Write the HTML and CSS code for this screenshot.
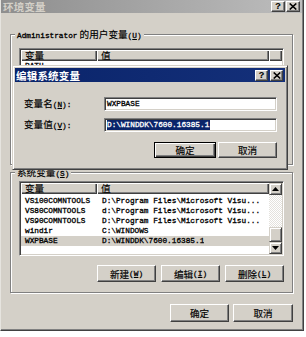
FILE: index.html
```html
<!DOCTYPE html>
<html>
<head>
<meta charset="utf-8">
<title>环境变量</title>
<link rel="stylesheet" href="styles.css">
</head>
<body>
<div class="win">
  <div class="titlebar inactive">
    <span class="ttext">环境变量</span>
    <div class="tbtns">
      <span class="tbtn q">?</span>
      <span class="tbtn"><svg width="8" height="7" viewBox="0 0 8 7"><path d="M0.7 0.5 L7.3 6.5 M7.3 0.5 L0.7 6.5" stroke="#000" stroke-width="1.6"/></svg></span>
    </div>
  </div>
  <div class="client">
    <div class="group user">
      <span class="glabel"><span class="m">Administrator</span> 的用户变量<span class="m">(<u>U</u>)</span></span>
      <div class="list ulist">
        <div class="lmain">
          <div class="lhead"><span class="hc c1">变量</span><span class="hc c2">值</span><span class="hc c3"></span></div>
          <div class="rows urows">
            <div class="row"><span class="c1 m">PATH</span><span class="c2 m"></span></div>
          </div>
        </div>
      </div>
    </div>

    <div class="group sys">
      <span class="glabel">系统变量<span class="m">(<u>S</u>)</span></span>
      <div class="list slist">
        <div class="lmain">
          <div class="lhead"><span class="hc c1">变量</span><span class="hc c2 grow">值</span></div>
          <div class="rows">
            <div class="row"><span class="c1 m">VS100COMNTOOLS</span><span class="c2 m">D:\Program Files\Microsoft Visu...</span></div>
            <div class="row"><span class="c1 m">VS80COMNTOOLS</span><span class="c2 m">d:\Program Files\Microsoft Visu...</span></div>
            <div class="row"><span class="c1 m">VS90COMNTOOLS</span><span class="c2 m">D:\Program Files\Microsoft Visu...</span></div>
            <div class="row"><span class="c1 m">windir</span><span class="c2 m">C:\WINDOWS</span></div>
            <div class="row sel"><span class="c1 m">WXPBASE</span><span class="c2 m">D:\WINDDK\7600.16385.1</span></div>
          </div>
        </div>
        <div class="sbar">
          <span class="sbtn"><svg width="7" height="4" viewBox="0 0 7 4"><path d="M3.5 0 L7 4 L0 4 Z" fill="#000"/></svg></span>
          <span class="track"></span>
          <span class="thumb"></span>
          <span class="sbtn"><svg width="7" height="4" viewBox="0 0 7 4"><path d="M0 0 L7 0 L3.5 4 Z" fill="#000"/></svg></span>
        </div>
      </div>
      <div class="btnrow">
        <button class="btn w59">新建<span class="m">(<u>W</u>)</span></button>
        <button class="btn w59">编辑<span class="m">(<u>I</u>)</span></button>
        <button class="btn w59">删除<span class="m">(<u>L</u>)</span></button>
      </div>
    </div>

    <div class="okrow">
      <button class="btn w59 tall">确定</button>
      <button class="btn w60 tall">取消</button>
    </div>
  </div>

  <div class="dialog">
    <div class="titlebar active">
      <span class="ttext">编辑系统变量</span>
      <div class="tbtns dl">
        <span class="tbtn q">?</span>
        <span class="tbtn"><svg width="8" height="7" viewBox="0 0 8 7"><path d="M0.7 0.5 L7.3 6.5 M7.3 0.5 L0.7 6.5" stroke="#000" stroke-width="1.6"/></svg></span>
      </div>
    </div>
    <div class="dbody">
      <div class="frow">
        <span class="flabel">变量名<span class="m">(<u>N</u>):</span></span>
        <span class="field m">WXPBASE</span>
      </div>
      <div class="frow">
        <span class="flabel">变量值<span class="m">(<u>V</u>):</span></span>
        <span class="field m"><span class="hl">D:\WINDDK\7600.16385.1</span></span>
      </div>
      <div class="dbtns">
        <button class="btn def">确定</button>
        <button class="btn w59 dh">取消</button>
      </div>
    </div>
  </div>
</div>
</body>
</html>
```
FILE: styles.css
```css
* { box-sizing: border-box; }
html, body { margin: 0; padding: 0; background: #fff; }
body {
  width: 306px;
  height: 337px;
  overflow: hidden;
  font-family: "Noto Sans CJK SC", "Liberation Sans", sans-serif;
  font-size: 9.6px;
  color: #000;
  -webkit-text-stroke: 0.15px currentColor;
}
.m {
  font-family: "Liberation Mono", "DejaVu Sans Mono", monospace;
  font-size: 7.75px;
  -webkit-text-stroke: 0.3px currentColor;
}
u { text-decoration: underline; text-underline-offset: 1px; }

.win {
  position: relative;
  width: 304px;
  height: 331px;
  background: #d4d0c8;
  border-left: 1px solid #e6e4df;
  border-right: 1px solid #404040;
  border-bottom: 1px solid #404040;
  box-shadow: inset -1px -1px 0 #808080;
  display: flex;
  flex-direction: column;
}

.titlebar {
  display: flex;
  align-items: center;
  justify-content: space-between;
  flex: none;
}
.win > .titlebar {
  height: 13px;
  margin-right: 1px;
  padding-left: 2px;
}
.inactive { background: linear-gradient(to right, #8e8e8e, #bdbdbd); }
.inactive .ttext { color: #d4d0c8; }
.active { background: linear-gradient(to right, #0a246a, #14307a); }
.active .ttext { color: #fff; }
.ttext {
  font-weight: bold;
  font-size: 10.5px;
  line-height: 13px;
  letter-spacing: 0.2px;
  -webkit-text-stroke: 0;
}
.tbtns { display: flex; gap: 1px; margin-right: 2px; }
.tbtn {
  width: 14px;
  height: 11px;
  background: #d4d0c8;
  border: 1px solid;
  border-color: #fff #404040 #404040 #fff;
  box-shadow: inset -1px -1px 0 #808080;
  display: flex;
  align-items: center;
  justify-content: center;
}
.tbtn.q {
  font-family: "Liberation Sans", sans-serif;
  font-weight: bold;
  font-size: 9px;
  line-height: 9px;
}
.tbtns.dl { gap: 2px; }
.tbtns.dl .tbtn { width: 13px; }

.client {
  padding: 21px 0 0 9px;
  display: flex;
  flex-direction: column;
}

.group {
  position: relative;
  width: 283px;
  border: 1px solid #808080;
  box-shadow: inset 1px 1px 0 #fff, 1px 1px 0 #fff;
  padding: 13px 8px 10px 8px;
}
.group.user { height: 131px; }
.group.sys { margin-top: 7px; padding-top: 8px; }
.glabel {
  position: absolute;
  top: -7px;
  left: 4px;
  padding: 0 2px;
  line-height: 12px;
  background: #d4d0c8;
  white-space: nowrap;
}

.list {
  width: 265px;
  background: #fff;
  border: 1px solid;
  border-color: #808080 #fff #fff #808080;
  box-shadow: inset 1px 1px 0 #404040, inset -1px -1px 0 #d4d0c8;
  padding: 1px;
  display: flex;
}
.ulist { height: 80px; }
.slist { height: 75px; }
.lmain { flex: 1; min-width: 0; display: flex; flex-direction: column; }
.lhead { display: flex; height: 11px; flex: none; }
.hc {
  background: #d4d0c8;
  box-shadow: inset 1px 1px 0 #fff, inset -1px -1px 0 #404040, inset -2px -2px 0 #808080;
  line-height: 11px;
  padding-left: 4px;
  white-space: nowrap;
}
.hc.c1 { width: 76px; flex: none; }
.hc.c2 { width: 172px; flex: none; }
.hc.c2.grow { flex: 1; width: auto; }
.hc.c3 { flex: 1; padding: 0; }

.rows { padding-top: 2px; }
.urows { padding-top: 0; }
.row {
  display: flex;
  height: 10px;
  line-height: 10px;
  white-space: nowrap;
}
.row .c1 { width: 76px; padding-left: 4px; flex: none; }
.row .c2 { padding-left: 5px; overflow: hidden; }
.row.sel { background: #d4d0c8; }

.sbar {
  width: 13px;
  flex: none;
  display: flex;
  flex-direction: column;
}
.sbtn, .thumb {
  background: #d4d0c8;
  border: 1px solid;
  border-color: #d4d0c8 #404040 #404040 #d4d0c8;
  box-shadow: inset 1px 1px 0 #fff, inset -1px -1px 0 #808080;
  flex: none;
}
.sbtn {
  height: 12px;
  display: flex;
  align-items: center;
  justify-content: center;
}
.thumb { height: 15px; }
.track {
  flex: 1;
  background: repeating-conic-gradient(#fff 0 25%, #e4e2dd 0 50%) 0 0 / 2px 2px;
}

.btnrow {
  display: flex;
  justify-content: flex-end;
  gap: 5px;
  margin-top: 9px;
}
.btn {
  height: 17px;
  padding: 0;
  margin: 0;
  background: #d4d0c8;
  border: 1px solid;
  border-color: #fff #404040 #404040 #fff;
  box-shadow: inset -1px -1px 0 #808080;
  font-family: "Noto Sans CJK SC", "Liberation Sans", sans-serif;
  font-size: 9.6px;
  color: #000;
  -webkit-text-stroke: 0.15px currentColor;
  line-height: 14px;
  display: flex;
  align-items: center;
  justify-content: center;
  white-space: nowrap;
}
.w59 { width: 59px; }
.w60 { width: 60px; }
.okrow {
  width: 283px;
  display: flex;
  justify-content: flex-end;
  gap: 4px;
  margin-top: 11px;
}
.btn.tall { height: 18px; }

.dialog {
  position: absolute;
  left: 11px;
  top: 65px;
  width: 276px;
  height: 105px;
  background: #d4d0c8;
  border: 1px solid;
  border-color: #d4d0c8 #404040 #404040 #d4d0c8;
  box-shadow: inset 1px 1px 0 #fff, inset -1px -1px 0 #808080;
  padding: 2px;
  display: flex;
  flex-direction: column;
}
.dialog > .titlebar {
  height: 14px;
  padding-left: 1px;
}
.dbody {
  padding: 15px 8px 0 9px;
  display: flex;
  flex-direction: column;
}
.frow {
  display: flex;
  align-items: center;
  height: 14px;
}
.frow + .frow { margin-top: 7px; }
.flabel { width: 80px; flex: none; white-space: nowrap; line-height: 14px; }
.field {
  width: 173px;
  height: 14px;
  background: #fff;
  border: 1px solid;
  border-color: #808080 #fff #fff #808080;
  box-shadow: inset 1px 1px 0 #404040, inset -1px -1px 0 #d4d0c8;
  padding-left: 2px;
  line-height: 12px;
  white-space: nowrap;
  display: flex;
  align-items: center;
}
.hl {
  background: #0a246a;
  color: #fff;
  line-height: 10px;
  padding-right: 1px;
}
.dbtns {
  display: flex;
  justify-content: flex-end;
  gap: 2px;
  margin-top: 10px;
}
.btn.dh { height: 16px; }
.btn.def {
  width: 62px;
  height: 16px;
  border: 1px solid #000;
  box-shadow: inset 1px 1px 0 #fff, inset -1px -1px 0 #404040, inset -2px -2px 0 #808080;
}
```
